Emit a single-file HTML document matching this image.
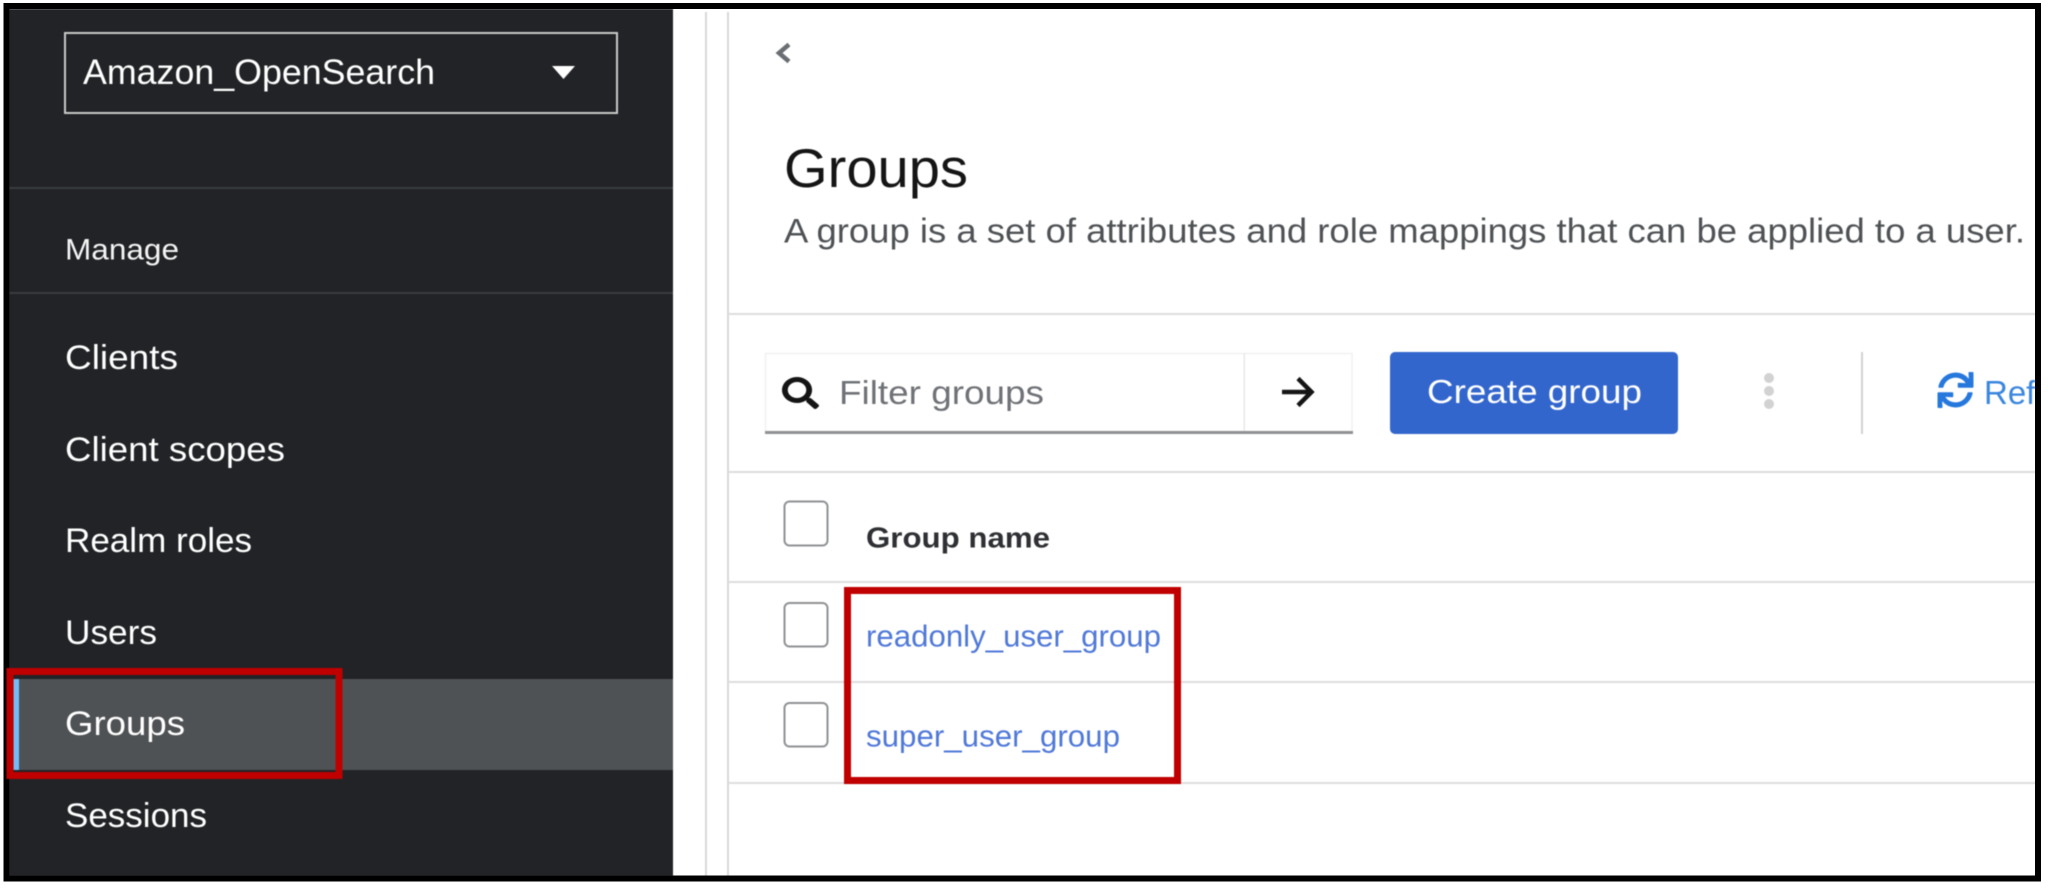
<!DOCTYPE html>
<html lang="en">
<head>
<meta charset="utf-8">
<title>Groups</title>
<style>
html,body{margin:0;padding:0;width:2048px;height:889px;background:#fff;overflow:hidden}
svg{display:block;position:absolute;left:0;top:0}
text{font-family:"Liberation Sans",Arial,sans-serif}
.s{filter:blur(.55px)}
</style>
</head>
<body>
<svg width="2048" height="889" viewBox="0 0 2048 889" xmlns="http://www.w3.org/2000/svg">
<rect width="2048" height="889" fill="#fff"/>
<g class="s">
<!-- Sidebar -->
<rect x="9" y="9" width="664" height="867" fill="#212326"/>
<rect x="9" y="187" width="664" height="2" fill="#393c3f"/>
<rect x="9" y="292" width="664" height="2" fill="#393c3f"/>
<rect x="9" y="679" width="664" height="91" fill="#4f5255"/>
<rect x="13" y="679" width="6" height="91" fill="#73bcf7"/>

<rect x="65" y="33" width="552" height="80" fill="none" stroke="#c8c8c8" stroke-width="2"/>
<text x="83" y="84" font-size="35" fill="#fff" textLength="352" lengthAdjust="spacingAndGlyphs">Amazon_OpenSearch</text>
<path d="M552 66H575L563.500 79Z" fill="#fff"/>

<text x="65" y="259.500" font-size="30" fill="#f4f4f4" textLength="114" lengthAdjust="spacingAndGlyphs">Manage</text>
<text x="65" y="369" font-size="34" fill="#fff" textLength="113" lengthAdjust="spacingAndGlyphs">Clients</text>
<text x="65" y="461" font-size="34" fill="#fff" textLength="220" lengthAdjust="spacingAndGlyphs">Client scopes</text>
<text x="65" y="552" font-size="34" fill="#fff" textLength="187" lengthAdjust="spacingAndGlyphs">Realm roles</text>
<text x="65" y="644" font-size="34" fill="#fff" textLength="92" lengthAdjust="spacingAndGlyphs">Users</text>
<text x="65" y="735" font-size="34" fill="#fff" textLength="120" lengthAdjust="spacingAndGlyphs">Groups</text>
<text x="65" y="827" font-size="34" fill="#fff" textLength="142" lengthAdjust="spacingAndGlyphs">Sessions</text>

<!-- Content lines -->
<rect x="705" y="12" width="2" height="864" fill="#d8d8d8"/>
<rect x="727" y="12" width="2" height="864" fill="#d8d8d8"/>
<rect x="728" y="313" width="1310" height="2" fill="#dcdcdc"/>
<rect x="728" y="471" width="1310" height="2" fill="#dcdcdc"/>
<rect x="728" y="581" width="1310" height="2" fill="#dcdcdc"/>
<rect x="728" y="681" width="1310" height="2" fill="#dcdcdc"/>
<rect x="728" y="782" width="1310" height="2" fill="#dcdcdc"/>

<!-- Back chevron -->
<path d="M789 44.500L779 53L789 61.500" fill="none" stroke="#6a6e73" stroke-width="4.500"/>

<text x="784" y="187" font-size="55" fill="#151515" textLength="184" lengthAdjust="spacingAndGlyphs">Groups</text>
<text x="784" y="242.500" font-size="34.500" fill="#4f5255" textLength="1241" lengthAdjust="spacingAndGlyphs">A group is a set of attributes and role mappings that can be applied to a user.</text>

<!-- Filter -->
<rect x="765.500" y="353.500" width="586.500" height="78" fill="#fff" stroke="#f0f0f0" stroke-width="1.500"/>
<rect x="1243.500" y="353" width="1.500" height="78" fill="#e8e8e8"/>
<rect x="765" y="431" width="588" height="3" fill="#8f9194"/>
<svg x="782" y="377" width="37" height="32" viewBox="0 0 512 512" preserveAspectRatio="none"><path fill="#151515" d="M505 442.700L405.300 343c-4.500-4.500-10.600-7-17-7H372c27.600-35.300 44-79.700 44-128C416 93.100 322.900 0 208 0S0 93.100 0 208s93.100 208 208 208c48.300 0 92.700-16.400 128-44v16.300c0 6.400 2.500 12.500 7 17l99.700 99.700c9.400 9.400 24.600 9.400 33.900 0l28.300-28.300c9.400-9.400 9.400-24.600.1-34zM208 336c-70.700 0-128-57.200-128-128 0-70.700 57.200-128 128-128 70.700 0 128 57.200 128 128 0 70.700-57.200 128-128 128z"/></svg>
<text x="839" y="404" font-size="33.500" fill="#6f7276" textLength="205" lengthAdjust="spacingAndGlyphs">Filter groups</text>
<path d="M1282 392H1311M1298 378.500L1311.500 392L1298 405.500" fill="none" stroke="#151515" stroke-width="4.500"/>

<!-- Button -->
<rect x="1390" y="352" width="288" height="82" rx="5" fill="#3366cc"/>
<text x="1427" y="403" font-size="33.500" fill="#fff" textLength="215" lengthAdjust="spacingAndGlyphs">Create group</text>

<!-- Kebab -->
<circle cx="1769" cy="378" r="5" fill="#d2d2d2"/>
<circle cx="1769" cy="391" r="5" fill="#d2d2d2"/>
<circle cx="1769" cy="404" r="5" fill="#d2d2d2"/>
<rect x="1861" y="352" width="2" height="82" fill="#d2d2d2"/>

<!-- Refresh -->
<svg x="1937" y="372" width="37" height="36" viewBox="0 0 512 512"><path fill="#2678dc" d="M440.650 12.570l4 82.770A247.160 247.160 0 0 0 255.830 8C134.730 8 33.910 94.920 12.290 209.820A12 12 0 0 0 24.090 224h49.050a12 12 0 0 0 11.670-9.260 175.910 175.910 0 0 1 317-56.940l-101.460-4.860a12 12 0 0 0-12.570 12v47.410a12 12 0 0 0 12 12H500a12 12 0 0 0 12-12V12a12 12 0 0 0-12-12h-47.370a12 12 0 0 0-11.980 12.570zM255.830 432a175.610 175.610 0 0 1-146-77.800l101.800 4.870a12 12 0 0 0 12.570-12v-47.400a12 12 0 0 0-12-12H12a12 12 0 0 0-12 12V500a12 12 0 0 0 12 12h47.350a12 12 0 0 0 12-12.600l-4.150-82.570A247.170 247.170 0 0 0 255.830 504c121.110 0 221.930-86.920 243.550-201.820a12 12 0 0 0-11.800-14.180h-49.050a12 12 0 0 0-11.670 9.260A175.860 175.860 0 0 1 255.830 432z"/></svg>
<text x="1984" y="404" font-size="33" fill="#3a86de">Refresh</text>

<!-- Table -->
<rect x="784.500" y="501.500" width="43" height="44" rx="5" fill="#fff" stroke="#8f9194" stroke-width="2"/>
<rect x="784.500" y="603" width="43" height="43.500" rx="5" fill="#fff" stroke="#8f9194" stroke-width="2"/>
<rect x="784.500" y="703" width="43" height="43.500" rx="5" fill="#fff" stroke="#8f9194" stroke-width="2"/>
<text x="866" y="547.500" font-size="29" font-weight="bold" fill="#2e3033" textLength="184" lengthAdjust="spacingAndGlyphs">Group name</text>
<text x="866" y="646.500" font-size="31" fill="#4f78d8" textLength="295" lengthAdjust="spacingAndGlyphs">readonly_user_group</text>
<text x="866" y="746.500" font-size="31" fill="#4f78d8" textLength="254" lengthAdjust="spacingAndGlyphs">super_user_group</text>
</g>

<!-- Black frame -->
<rect x="6.500" y="6" width="2031.500" height="872.500" fill="none" stroke="#000" stroke-width="6"/>
<rect x="2041" y="0" width="7" height="889" fill="#fff"/>
<rect x="0" y="882" width="2048" height="7" fill="#fff"/>

<!-- Red annotations (drawn over the frame) -->
<g class="s">
<rect x="10" y="671.500" width="329" height="104" fill="none" stroke="#c00000" stroke-width="7"/>
<rect x="847.500" y="590.500" width="330" height="190" fill="none" stroke="#c00000" stroke-width="7"/>
</g>
</svg>
</body>
</html>
